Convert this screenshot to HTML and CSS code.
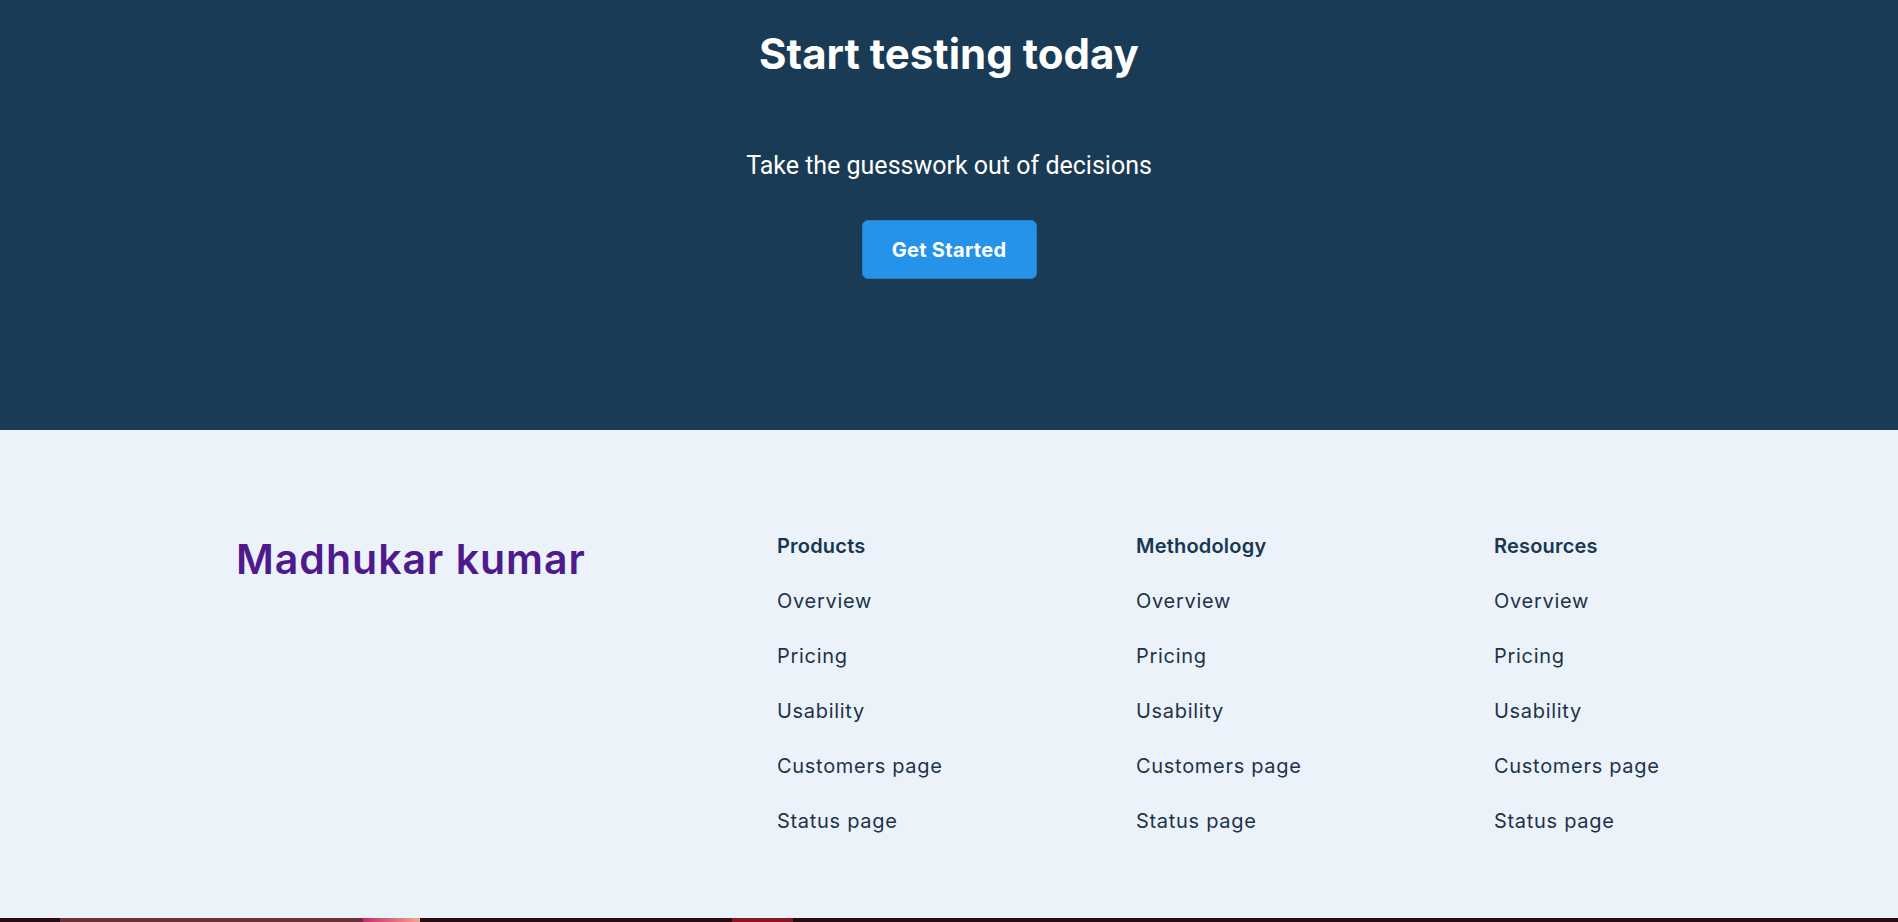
FILE: index.html
```html
<!DOCTYPE html>
<html lang="en">
<head>
<meta charset="utf-8">
<title>Start testing today</title>
<link rel="stylesheet" href="styles.css">
</head>
<body>
<section class="cta">
  <h1 class="cta-title">Start testing today</h1>
  <p class="cta-sub">Take the guesswork out of decisions</p>
  <a class="cta-btn" href="#">Get Started</a>
</section>
<footer class="footer">
  <div class="footer-inner">
    <div class="brand">Madhukar kumar</div>
    <div class="col">
      <h3 class="col-title">Products</h3>
      <a class="col-link" href="#">Overview</a>
      <a class="col-link" href="#">Pricing</a>
      <a class="col-link" href="#">Usability</a>
      <a class="col-link" href="#">Customers page</a>
      <a class="col-link" href="#">Status page</a>
    </div>
    <div class="col">
      <h3 class="col-title">Methodology</h3>
      <a class="col-link" href="#">Overview</a>
      <a class="col-link" href="#">Pricing</a>
      <a class="col-link" href="#">Usability</a>
      <a class="col-link" href="#">Customers page</a>
      <a class="col-link" href="#">Status page</a>
    </div>
    <div class="col">
      <h3 class="col-title">Resources</h3>
      <a class="col-link" href="#">Overview</a>
      <a class="col-link" href="#">Pricing</a>
      <a class="col-link" href="#">Usability</a>
      <a class="col-link" href="#">Customers page</a>
      <a class="col-link" href="#">Status page</a>
    </div>
  </div>
</footer>
<div class="strip">
  <span class="seg seg-dark1"></span>
  <span class="seg seg-mauve"></span>
  <span class="seg seg-grad"></span>
  <span class="seg seg-dark2"></span>
  <span class="seg seg-red"></span>
  <span class="seg seg-dark3"></span>
</div>
</body>
</html>
```
FILE: styles.css
```css
* { box-sizing: border-box; }
html, body { margin: 0; padding: 0; }
body {
  font-family: "Inter", "Open Sans", sans-serif;
  background: #ebf2fa;
  overflow: hidden;
}
.cta {
  background: #193b55;
  height: 430px;
  display: flex;
  flex-direction: column;
  align-items: center;
  padding-top: 28px;
}
.cta-title {
  margin: 0;
  color: #ffffff;
  font-family: "Inter", sans-serif;
  font-weight: 700;
  font-size: 42px;
  line-height: 52px;
}
.cta-sub {
  margin: 72px 0 0;
  color: #ffffff;
  font-family: "Roboto", sans-serif;
  font-size: 25px;
  line-height: 28px;
}
.cta-btn {
  margin-top: 40px;
  width: 175px;
  height: 59px;
  background: #2593e9;
  border-radius: 6px;
  border: 1px solid #2a7fc4;
  color: #ffffff;
  text-decoration: none;
  font-family: "Inter", sans-serif;
  font-weight: 700;
  font-size: 20px;
  letter-spacing: 0.3px;
  display: flex;
  align-items: center;
  justify-content: center;
}
.footer {
  background: #ebf2fa;
  height: 488px;
  padding-top: 104px;
}
.footer-inner {
  display: grid;
  grid-template-columns: 541px 359px 358px 1fr;
  padding-left: 236px;
}
.brand {
  color: #4f1a8b;
  font-family: "Inter", sans-serif;
  font-weight: 600;
  font-size: 41px;
  letter-spacing: 1px;
  line-height: 48px;
  margin-top: 1px;
}
.col {
  display: flex;
  flex-direction: column;
}
.col-title {
  margin: 0;
  color: #183751;
  font-weight: 600;
  font-size: 20px;
  letter-spacing: 0.2px;
  line-height: 24px;
}
.col-link {
  margin-top: 31px;
  color: #1e3249;
  text-decoration: none;
  font-weight: 400;
  font-size: 20px;
  letter-spacing: 0.7px;
  line-height: 24px;
}
.strip {
  display: flex;
  height: 4px;
  background: #2a0a10;
}
.seg { display: block; height: 4px; }
.seg-dark1 { width: 60px; background: #2a0a10; }
.seg-mauve { width: 303px; background: #6e2f3a; }
.seg-grad { width: 57px; background: linear-gradient(90deg, #c0306a, #f4a58a); }
.seg-dark2 { width: 312px; background: #2a0a10; }
.seg-red { width: 61px; background: #8a1424; }
.seg-dark3 { flex: 1; background: #2a0a10; }
```
